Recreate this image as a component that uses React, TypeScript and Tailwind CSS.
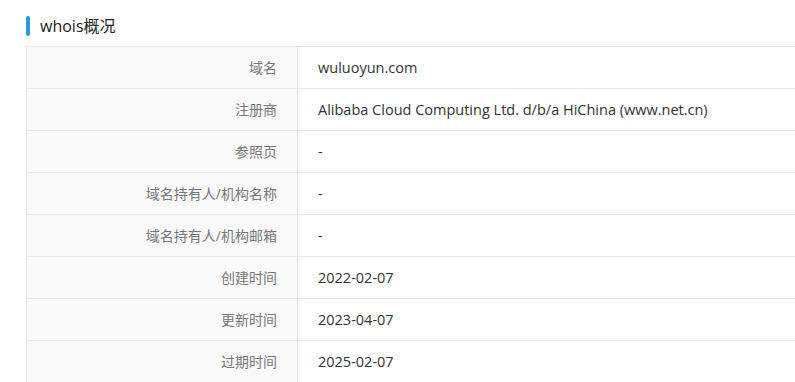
import React from "react";

const rows: [string, string][] = [
  ["域名", "wuluoyun.com"],
  ["注册商", "Alibaba Cloud Computing Ltd. d/b/a HiChina (www.net.cn)"],
  ["参照页", "-"],
  ["域名持有人/机构名称", "-"],
  ["域名持有人/机构邮箱", "-"],
  ["创建时间", "2022-02-07"],
  ["更新时间", "2023-04-07"],
  ["过期时间", "2025-02-07"],
];

export default function App() {
  return (
    <div
      className="w-[795px] h-[382px] overflow-hidden bg-white"
      style={{ fontFamily: '"Open Sans", "Noto Sans CJK SC", sans-serif' }}
    >
      <div className="pl-[26px] pt-[16px]">
        {/* 标题 */}
        <div className="flex items-center h-[20px]">
          <span className="w-[4px] h-[20px] bg-[#1e9fe8] rounded-[2px]" />
          <h2 className="ml-[10px] text-[16px] leading-[20px] text-[#222]">whois概况</h2>
        </div>

        {/* 表格 */}
        <div className="mt-[10px] w-[800px] border-t border-l border-[#e8e8e8]">
          {rows.map(([label, value]) => (
            <div key={label} className="flex h-[42px] border-b border-[#e8e8e8]">
              <div className="w-[271px] shrink-0 bg-[#fafafa] border-r border-[#e8e8e8] flex items-center justify-end pr-[20px] text-[14px] text-[#777]">
                {label}
              </div>
              <div className="flex-1 flex items-center pl-[20px] text-[14.5px] text-[#333]">
                {value}
              </div>
            </div>
          ))}
        </div>
      </div>
    </div>
  );
}
